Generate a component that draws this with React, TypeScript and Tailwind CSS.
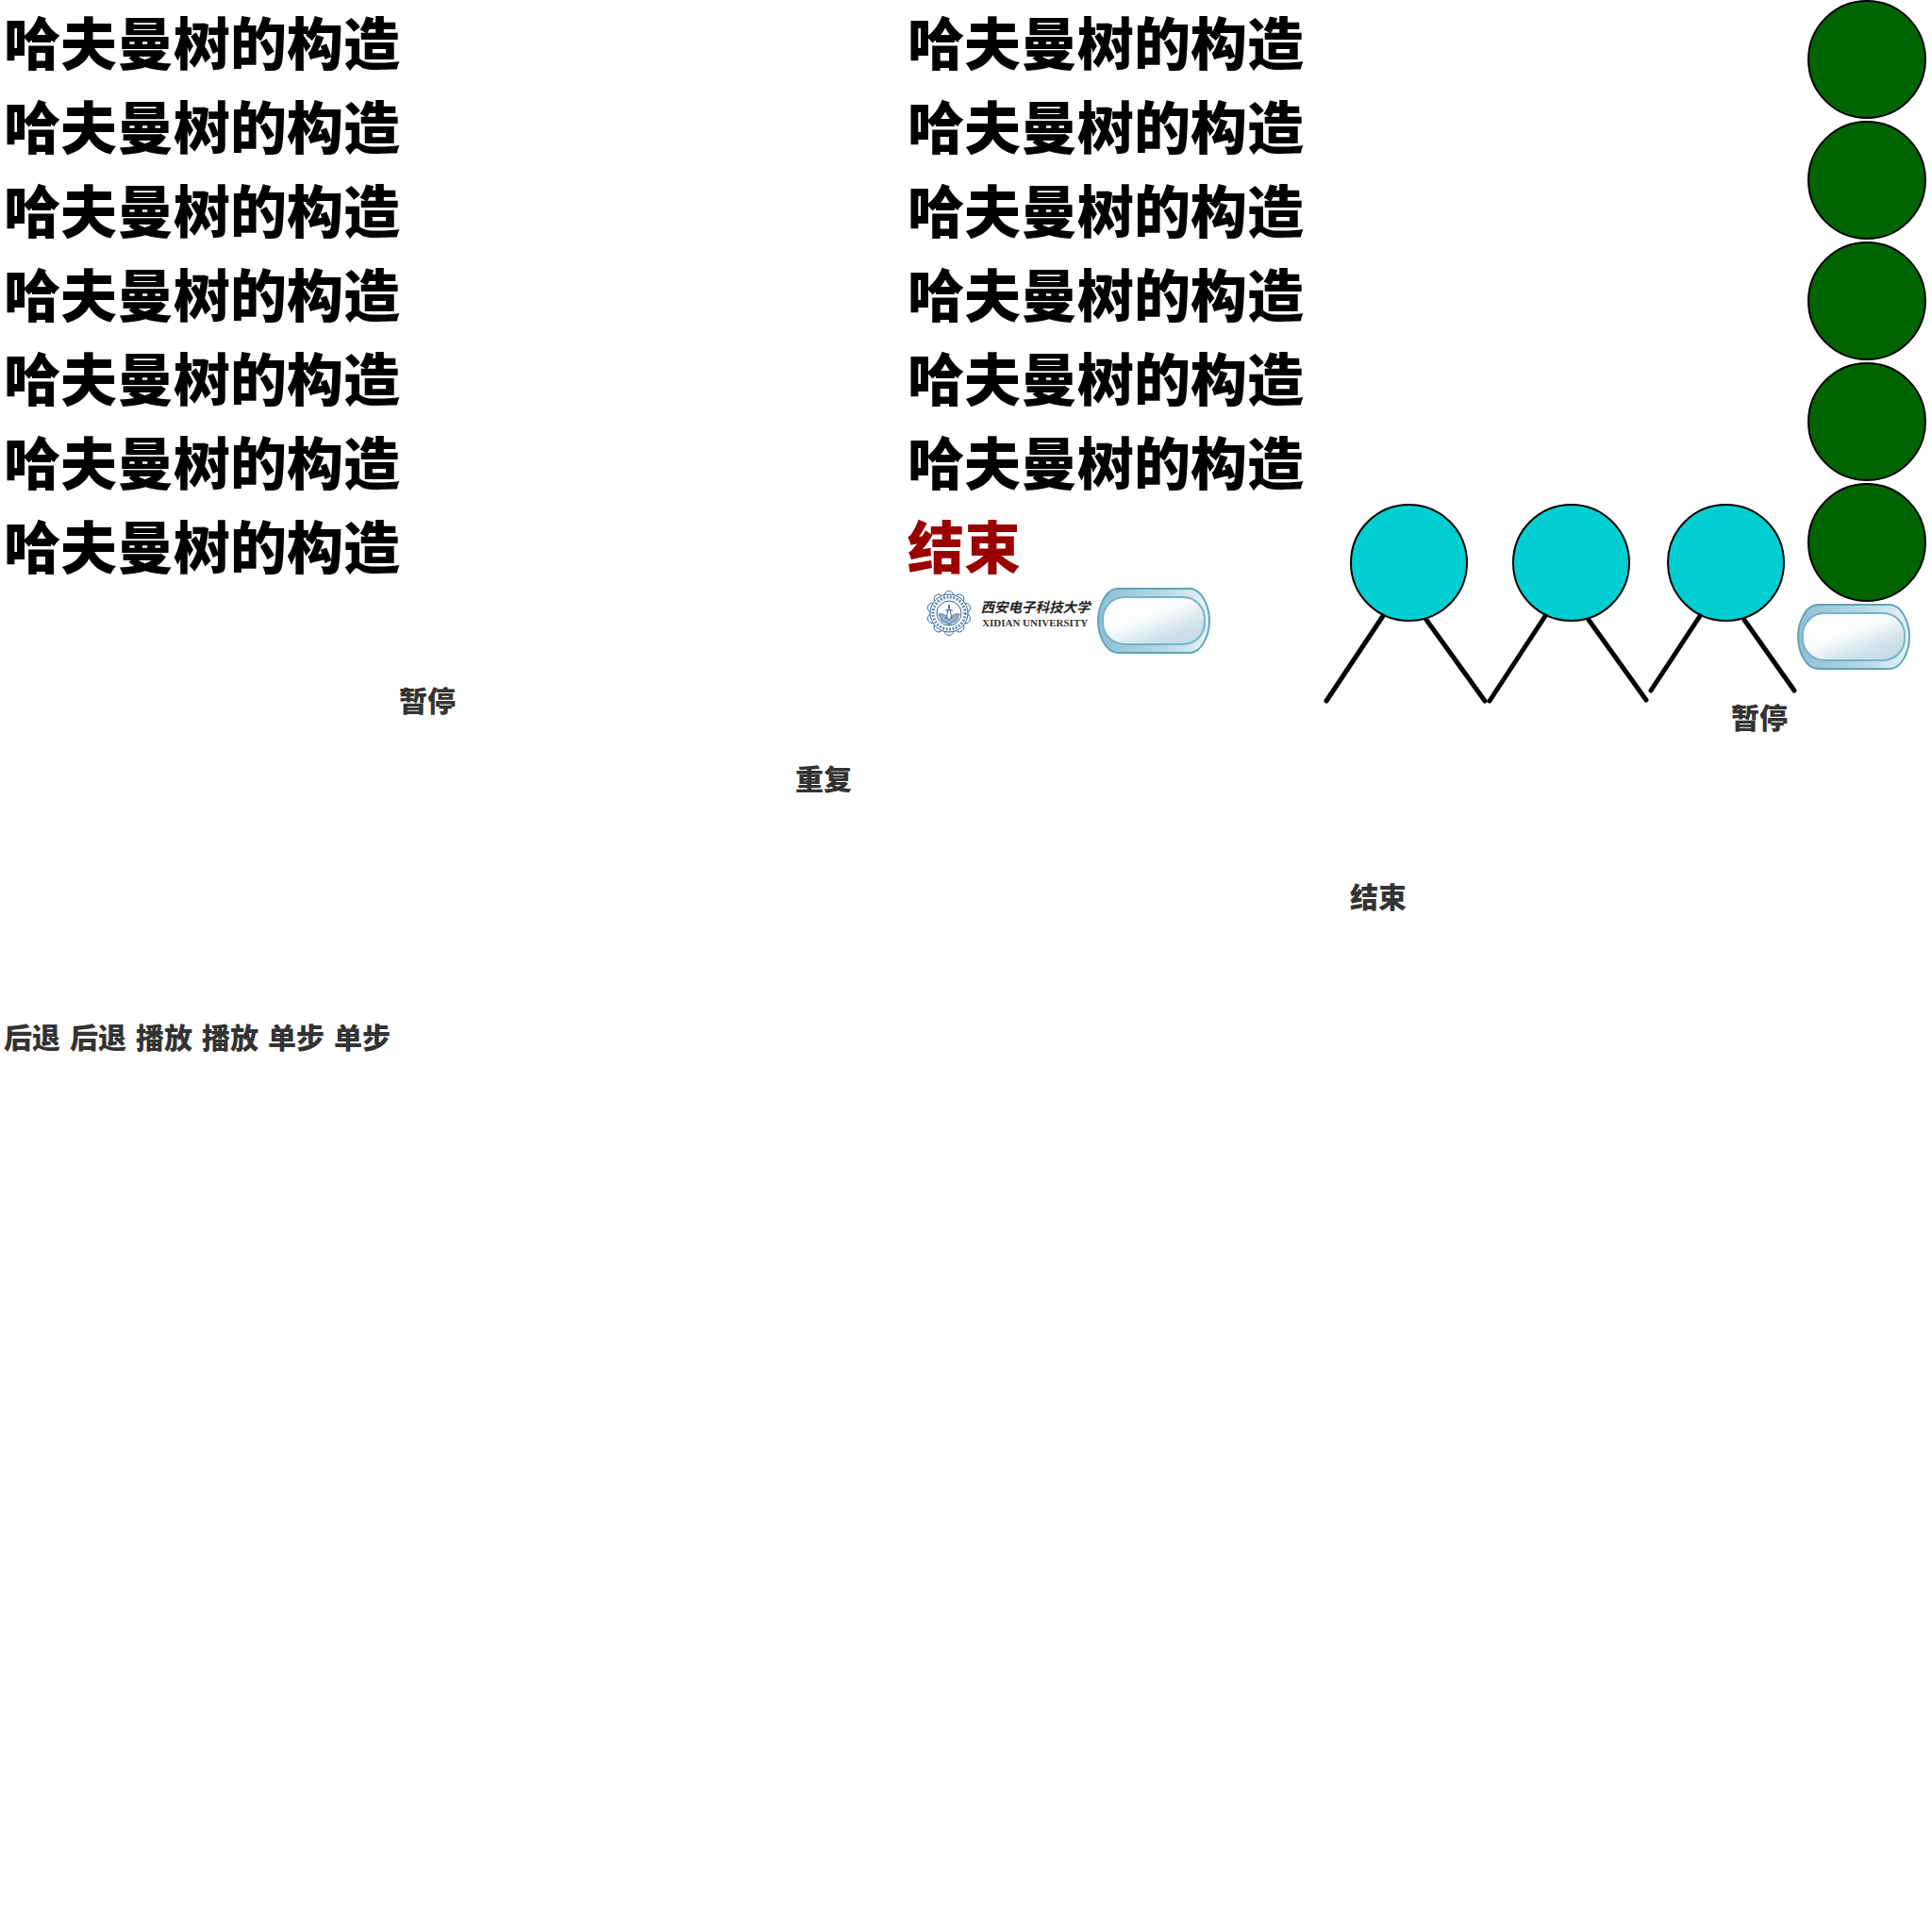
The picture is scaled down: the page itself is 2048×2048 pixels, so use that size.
const cjk = { fontFamily: '"Noto Sans CJK SC", "Noto Sans CJK JP", sans-serif' };

const TITLE = "哈夫曼树的构造";

function TitleLine({ children, red }: { children: string; red?: boolean }) {
  return (
    <div className={`h-[89px] text-[60px] font-black leading-[89px] ${red ? "text-[#990000]" : "text-black"}`}>
      {children}
    </div>
  );
}

function Label({ children, className = "" }: { children: string; className?: string }) {
  return <span className={`text-[30px] font-black leading-[44px] text-[#333333] ${className}`}>{children}</span>;
}

function Pill({ id, className }: { id: string; className: string }) {
  return (
    <svg viewBox="0 0 120 70" className={className}>
      <defs>
        <linearGradient id={`${id}-outer`} x1="0" y1="0" x2="1" y2="0">
          <stop offset="0" stopColor="#8fbfd6" />
          <stop offset="0.6" stopColor="#b9d8e6" />
          <stop offset="1" stopColor="#e8f3f7" />
        </linearGradient>
        <linearGradient id={`${id}-inner`} x1="0.15" y1="0.1" x2="0.85" y2="0.95">
          <stop offset="0" stopColor="#ffffff" />
          <stop offset="0.38" stopColor="#fbfdfd" />
          <stop offset="0.78" stopColor="#cfe2eb" />
          <stop offset="1" stopColor="#c4dce7" />
        </linearGradient>
      </defs>
      <path
        d="M22 1H98C111 1 119 20 119 35C119 50 111 69 98 69H22C9 69 1 50 1 35C1 20 9 1 22 1Z"
        fill={`url(#${id}-outer)`}
        stroke="#5fa5b5"
        strokeWidth="2"
      />
      <rect x="6" y="10" width="108" height="50" rx="23" fill={`url(#${id}-inner)`} stroke="#78b3c9" strokeWidth="2" />
    </svg>
  );
}

function Seal() {
  const spokes = Array.from({ length: 10 }, (_, i) => i * 36);
  return (
    <svg viewBox="0 0 48 48" className="h-[48px] w-[48px]">
      {spokes.map((deg) => (
        <circle key={deg} cx="24" cy="5.5" r="5" fill="none" stroke="#2f6499" strokeWidth="0.9" transform={`rotate(${deg} 24 24)`} />
      ))}
      <circle cx="24" cy="24" r="20" fill="#fff" stroke="#2f6499" strokeWidth="1" />
      <circle cx="24" cy="24" r="13" fill="#fff" stroke="#2f6499" strokeWidth="1" />
      <circle cx="24" cy="24" r="17" fill="none" stroke="#5d88b3" strokeWidth="3" strokeDasharray="2 1.5" />
      <path d="M13 25c5-1 8 1 11 6 3-5 6-7 11-6l-3 7-8 4-8-4z" fill="#8fb0cf" stroke="#2f6499" strokeWidth="0.8" />
      <path d="M24 15l-3 15M24 15l3 15M20 21l8 0" fill="none" stroke="#2f6499" strokeWidth="1" />
    </svg>
  );
}

function Logo() {
  return (
    <div className="flex h-[54px] w-[178px] items-center gap-[11px]">
      <Seal />
      <div className="flex flex-col">
        <span
          className="w-[118px] text-[14.5px] font-bold leading-[20px] whitespace-nowrap text-[#222222] [transform:skewX(-14deg)]"
          style={{ fontFamily: '"Noto Sans CJK SC", serif' }}
        >
          西安电子科技大学
        </span>
        <span className="text-[11px] font-bold leading-[14px] whitespace-nowrap text-[#333333] [font-family:'Liberation_Serif',serif]">
          XIDIAN UNIVERSITY
        </span>
      </div>
    </div>
  );
}

const edges = [
  [1466, 653, 1406, 743],
  [1512, 657, 1574, 743],
  [1638, 653, 1579, 743],
  [1684, 657, 1745, 742],
  [1802, 653, 1750, 732],
  [1849, 657, 1902, 732],
];

export default function App() {
  return (
    <div className="relative h-[2048px] w-[2048px] overflow-hidden bg-white" style={cjk}>
      <div className="-mt-[2px] flex">
        <div className="flex w-[962px] flex-col pl-[4px]">
          {Array.from({ length: 7 }, (_, i) => (
            <TitleLine key={i}>{TITLE}</TitleLine>
          ))}
        </div>
        <div className="flex flex-col">
          {Array.from({ length: 6 }, (_, i) => (
            <TitleLine key={i}>{TITLE}</TitleLine>
          ))}
          <TitleLine red>结束</TitleLine>
        </div>
      </div>

      {/* 树的结点 */}
      <div className="absolute left-[1916px] top-0 flex flex-col gap-[2px]">
        {[0, 1, 2, 3, 4].map((i) => (
          <div key={i} className="h-[126px] w-[126px] rounded-full border-2 border-black bg-[#006400]" />
        ))}
      </div>
      {[1431, 1603, 1767].map((x) => (
        <div
          key={x}
          className="absolute top-[534px] h-[125px] w-[125px] rounded-full border-2 border-black bg-[#00ced1]"
          style={{ left: x }}
        />
      ))}
      <svg className="absolute left-0 top-0 h-[2048px] w-[2048px]" viewBox="0 0 2048 2048" fill="none">
        {edges.map(([x1, y1, x2, y2]) => (
          <line key={x1} x1={x1} y1={y1} x2={x2} y2={y2} stroke="#000" strokeWidth="5" strokeLinecap="round" />
        ))}
      </svg>

      <div className="absolute left-[982px] top-[623px]">
        <Logo />
      </div>
      <Pill id="a" className="absolute left-[1163px] top-[623px] h-[70px] w-[120px]" />
      <Pill id="b" className="absolute left-[1905px] top-[640px] h-[70px] w-[120px]" />

      <Label className="absolute left-[423px] top-[719px]">暂停</Label>
      <Label className="absolute left-[843px] top-[802px]">重复</Label>
      <Label className="absolute left-[1835px] top-[737px]">暂停</Label>
      <Label className="absolute left-[1431px] top-[927px]">结束</Label>

      <div className="absolute left-[4px] top-[1076px] flex gap-[10px]">
        {["后退", "后退", "播放", "播放", "单步", "单步"].map((t, i) => (
          <Label key={i}>{t}</Label>
        ))}
      </div>
    </div>
  );
}
